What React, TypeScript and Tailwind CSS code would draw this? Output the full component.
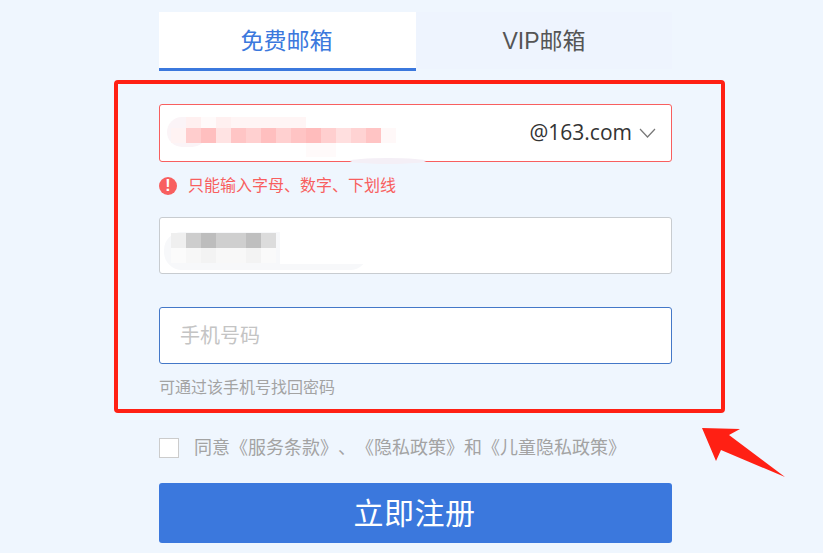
const cjk = "font-['Liberation_Sans','Noto_Sans_CJK_SC',sans-serif]";

// mosaic cells are 15px wide, colours read off the reference
function Mosaic({ rows }: { rows: { y: number; h: number; x: number; colors: string[] }[] }) {
  return (
    <>
      {rows.map((row) =>
        row.colors.map((color, i) => <rect key={`${row.y}-${i}`} x={row.x + i * 15} y={row.y} width={15} height={row.h} fill={color} />),
      )}
    </>
  );
}

function EmailSmudge() {
  return (
    <svg className="absolute top-0 left-0 overflow-visible" width={511} height={56} viewBox="0 0 511 56">
      <rect x={7} y={12} width={40} height={30} rx={15} fill="#fbf4f7" />
      <ellipse cx={228} cy={56} rx={38} ry={3} fill="#f4eff6" />
      <Mosaic
        rows={[
          { y: 12, h: 11, x: 26, colors: ["#fff0f0", "#fffafa", "#fff0f0", "#fff5f5", "#fff5f5", "#fff5f5", "#fff5f5", "#fff5f5"] },
          {
            y: 23,
            h: 15,
            x: 11,
            colors: ["#fff3f3", "#ffcdcd", "#ffbfbf", "#ffe3e3", "#ffc5c5", "#ffd0d0", "#ffbfbf", "#ffd0d0", "#ffc4c4", "#ffbcbc", "#ffcfcf", "#ffdfdf", "#ffd3d3", "#ffc4c4", "#fff8f8"],
          },
          { y: 38, h: 14, x: 146, colors: ["#fffafa", "#fffafa"] },
        ]}
      />
    </svg>
  );
}

function PasswordSmudge() {
  return (
    <svg className="absolute inset-0" width={511} height={55} viewBox="0 0 511 55">
      <rect x={4} y={14} width={204} height={38} rx={18} fill="#f7f8fa" />
      <rect x={120} y={14} width={100} height={32} fill="#ffffff" />
      <Mosaic
        rows={[
          { y: 15, h: 15, x: 11, colors: ["#efefef", "#cdcdcd", "#bdbdbd", "#cfcfcf", "#cfcfcf", "#bfbfbf", "#dcdcdc"] },
          { y: 30, h: 15, x: 11, colors: ["#fbfbfb", "#f7f7f7", "#f3f3f3", "#f8f8f8", "#f8f8f8", "#f3f3f3", "#fafafa"] },
        ]}
      />
    </svg>
  );
}

export default function App() {
  return (
    <div className={`relative h-[553px] w-[823px] overflow-hidden bg-[#eff6fe] pt-3 pl-[159px] ${cjk}`}>
      <div className="w-[513px]">
        {/* tabs */}
        <div className="flex h-[59px]">
          <div className="flex h-[59px] w-[257px] items-center justify-center border-b-[3px] border-[#3b78dd] bg-white pt-[2px] pr-[2px] text-[23px] text-[#3b78dd]">免费邮箱</div>
          <div className="flex h-[57px] w-[256px] items-center justify-center bg-[#eef4fe] pt-[2px] text-[23px] text-[#555555]">VIP邮箱</div>
        </div>

        {/* email */}
        <div className="relative mt-[33px] flex h-[58px] items-center justify-end rounded-[3px] border border-[#f85f5f] bg-white pr-[15px]">
          <EmailSmudge />
          <span className="relative font-['Open_Sans',sans-serif] text-[21px] text-[#333333]">@163.com</span>
          <svg className="relative ml-[7px]" width={17} height={10} viewBox="0 0 17 10" fill="none" stroke="#777777" strokeWidth={1.2}>
            <path d="M1 1 L8.5 9 L16 1" />
          </svg>
        </div>
        <div className="mt-[14px] flex h-[20px] items-center text-base text-[#f85f5f]">
          <span className="flex h-[18px] w-[18px] items-center justify-center rounded-full bg-[#f85f5f] text-base font-bold text-white">!</span>
          <span className="ml-[11px]">只能输入字母、数字、下划线</span>
        </div>

        {/* password */}
        <div className="relative mt-[21px] h-[57px] rounded-[3px] border border-[#c8ccd0] bg-white">
          <PasswordSmudge />
        </div>

        {/* phone */}
        <div className="mt-[33px] flex h-[57px] items-center rounded-[3px] border border-[#4478c8] bg-white pl-5 text-[20px] text-[#c4c4c4]">手机号码</div>
        <div className="mt-[13px] h-[22px] text-base leading-[22px] text-[#a3a3a3]">可通过该手机号找回密码</div>

        {/* agreement */}
        <div className="mt-[39px] flex h-[20px] items-center">
          <span className="h-[20px] w-[20px] border border-[#cccccc] bg-white" />
          <span className="ml-[15px] text-[18px] whitespace-nowrap text-[#a3a3a3] [font-feature-settings:'chws'_0] [text-spacing-trim:space-all]">同意《服务条款》、《隐私政策》和《儿童隐私政策》</span>
        </div>

        <button className="mt-[25px] flex h-[60px] w-full items-center justify-center rounded-[3px] bg-[#3b78dd] pr-[2px] text-[30px] tracking-[0.5px] text-white">立即注册</button>
      </div>

      {/* red annotation drawn over the page */}
      <div className="absolute top-[80px] left-[114px] h-[333px] w-[611px] rounded-[4px] border-4 border-[#ff2014]" />
      <svg className="absolute top-[420px] left-[695px]" width={100} height={70} viewBox="0 0 100 70">
        <path d="M7 8 L45 9 L34 15 L90 57 L26 30 L21 41 Z" fill="#ff2014" />
      </svg>
    </div>
  );
}
